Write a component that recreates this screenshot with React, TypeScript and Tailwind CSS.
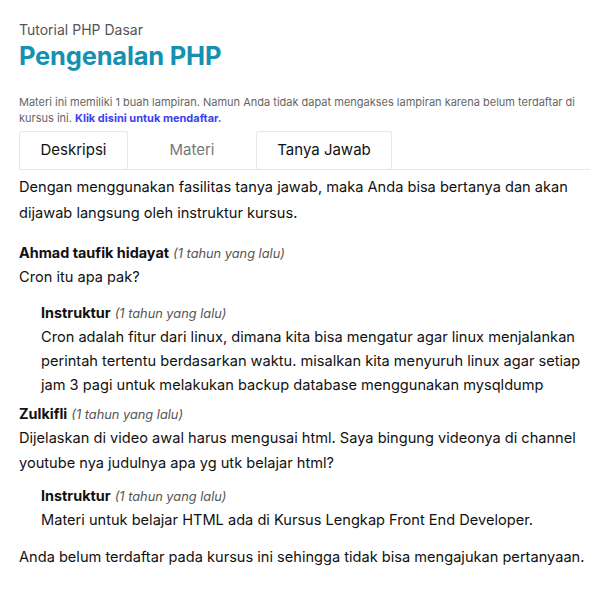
import React from "react";

function Meta({ name }: { name: string }) {
  return (
    <div className="text-[14.4px] leading-[22px]">
      <span className="font-bold text-[#111]">{name}</span>{" "}
      <span className="italic text-[12.8px] text-[#555]">(1 tahun yang lalu)</span>
    </div>
  );
}

export default function App() {
  return (
    <div
      className="bg-white w-[600px] h-[600px] pl-[19px] pr-[8px] pt-[20px] text-[#111]"
      style={{ fontFamily: "Inter, 'Noto Sans', sans-serif" }}
    >
      <div className="text-[14px] leading-[20px] text-[#555]">Tutorial PHP Dasar</div>
      <h1 className="text-[25.5px] leading-[32px] font-bold text-[#1590b0] tracking-[-0.2px]">
        Pengenalan PHP
      </h1>
      <p className="mt-[23px] text-[11px] leading-[15.5px] text-[#666]">
        Materi ini memiliki 1 buah lampiran. Namun Anda tidak dapat mengakses lampiran karena belum terdaftar di kursus ini.{" "}
        <a className="font-bold text-[#3b3ff0]">Klik disini untuk mendaftar.</a>
      </p>
      <div className="mt-[5px] flex border-b border-[#e5e7eb] mr-[2px]">
        <div className="w-[109px] h-[38px] flex items-center justify-center border border-b-0 border-[#e5e7eb] rounded-t-[3px] text-[15px] text-[#111]">
          Deskripsi
        </div>
        <div className="w-[128px] h-[38px] flex items-center justify-center text-[15px] text-[#777]">
          Materi
        </div>
        <div className="w-[136px] h-[38px] flex items-center justify-center border border-b-0 border-[#e5e7eb] rounded-t-[3px] text-[15px] text-[#111]">
          Tanya Jawab
        </div>
      </div>
      <p className="mt-[4px] text-[14.6px] leading-[26px]">
        Dengan menggunakan fasilitas tanya jawab, maka Anda bisa bertanya dan akan dijawab langsung oleh instruktur kursus.
      </p>

      <div className="mt-[16px]">
        <Meta name="Ahmad taufik hidayat" />
        <p className="text-[14.6px] leading-[24px]">Cron itu apa pak?</p>
        <div className="mt-[13px] pl-[22px]">
          <Meta name="Instruktur" />
          <p className="text-[14.6px] leading-[24px]">
            Cron adalah fitur dari linux, dimana kita bisa mengatur agar linux menjalankan perintah tertentu berdasarkan waktu. misalkan kita menyuruh linux agar setiap jam 3 pagi untuk melakukan backup database menggunakan mysqldump
          </p>
        </div>
      </div>

      <div className="mt-[6px]">
        <Meta name="Zulkifli" />
        <p className="text-[14.6px] leading-[25px]">
          Dijelaskan di video awal harus mengusai html. Saya bingung videonya di channel youtube nya judulnya apa yg utk belajar html?
        </p>
        <div className="mt-[9px] pl-[22px]">
          <Meta name="Instruktur" />
          <p className="text-[14.6px] leading-[24px]">
            Materi untuk belajar HTML ada di Kursus Lengkap Front End Developer.
          </p>
        </div>
      </div>

      <p className="mt-[13px] text-[14.6px] leading-[24px]">
        Anda belum terdaftar pada kursus ini sehingga tidak bisa mengajukan pertanyaan.
      </p>
    </div>
  );
}
